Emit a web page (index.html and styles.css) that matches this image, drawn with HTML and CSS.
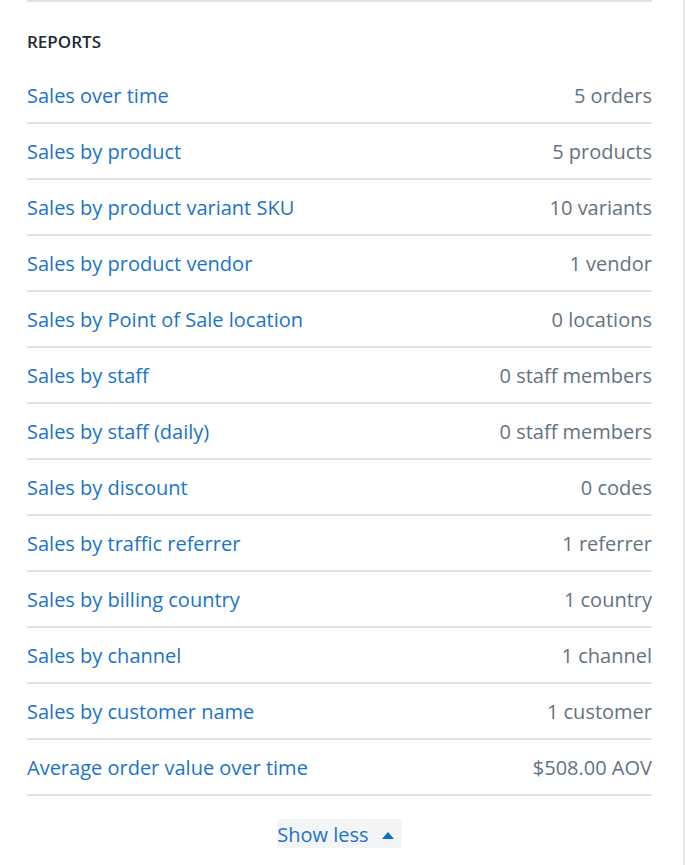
FILE: index.html
```html
<!DOCTYPE html>
<html>
<head>
<meta charset="utf-8">
<link rel="stylesheet" href="styles.css">
</head>
<body>
<div class="page">
  <section class="card">
    <h2 class="title">REPORTS</h2>
    <ul class="list">
      <li class="row"><a class="name" href="#">Sales over time</a><span class="value">5 orders</span></li>
      <li class="row"><a class="name" href="#">Sales by product</a><span class="value">5 products</span></li>
      <li class="row"><a class="name" href="#">Sales by product variant SKU</a><span class="value">10 variants</span></li>
      <li class="row"><a class="name" href="#">Sales by product vendor</a><span class="value">1 vendor</span></li>
      <li class="row"><a class="name" href="#">Sales by Point of Sale location</a><span class="value">0 locations</span></li>
      <li class="row"><a class="name" href="#">Sales by staff</a><span class="value">0 staff members</span></li>
      <li class="row"><a class="name" href="#">Sales by staff (daily)</a><span class="value">0 staff members</span></li>
      <li class="row"><a class="name" href="#">Sales by discount</a><span class="value">0 codes</span></li>
      <li class="row"><a class="name" href="#">Sales by traffic referrer</a><span class="value">1 referrer</span></li>
      <li class="row"><a class="name" href="#">Sales by billing country</a><span class="value">1 country</span></li>
      <li class="row"><a class="name" href="#">Sales by channel</a><span class="value">1 channel</span></li>
      <li class="row"><a class="name" href="#">Sales by customer name</a><span class="value">1 customer</span></li>
      <li class="row"><a class="name" href="#">Average order value over time</a><span class="value">$508.00 AOV</span></li>
    </ul>
    <div class="footer">
      <button class="toggle" type="button"><span class="toggle-text">Show less</span><svg class="caret" width="12" height="8" viewBox="0 0 12 8"><path d="M0 8 L6 1 L12 8 Z" fill="#0a6fc2"/></svg></button>
    </div>
  </section>
</div>
</body>
</html>
```

FILE: styles.css
```css
html, body {
  margin: 0;
  padding: 0;
  background: #ffffff;
}
body {
  font-family: "Open Sans", "Noto Sans", sans-serif;
}
.page {
  width: 683px;
  height: 865px;
  border-right: 2px solid #e6e8eb;
  box-sizing: content-box;
}
.card {
  margin: 0 31px 0 27px;
  border-top: 2px solid #dfe3e8;
}
.title {
  margin: 0;
  height: 66px;
  box-sizing: border-box;
  padding-top: 29px;
  font-size: 17px;
  line-height: 22px;
  font-weight: 600;
  color: #212b36;
}
.list {
  list-style: none;
  margin: 0;
  padding: 0;
}
.row {
  display: flex;
  justify-content: space-between;
  align-items: center;
  height: 54px;
  border-bottom: 2px solid #dfe3e8;
  font-size: 20px;
}
.name {
  color: #1a74c8;
  text-decoration: none;
}
.value {
  color: #637381;
}
.footer {
  display: flex;
  justify-content: center;
  padding-top: 23px;
}
.toggle {
  display: flex;
  align-items: center;
  gap: 13px;
  height: 29px;
  padding: 0 8px 0 0;
  border: none;
  border-radius: 4px;
  background: #f4f5f6;
  font-family: "Open Sans", "Noto Sans", sans-serif;
  font-size: 20px;
  color: #1a74c8;
}
.toggle-text {
  padding-top: 3px;
  line-height: 26px;
}
.caret {
  display: block;
  margin-top: 2px;
}
```
